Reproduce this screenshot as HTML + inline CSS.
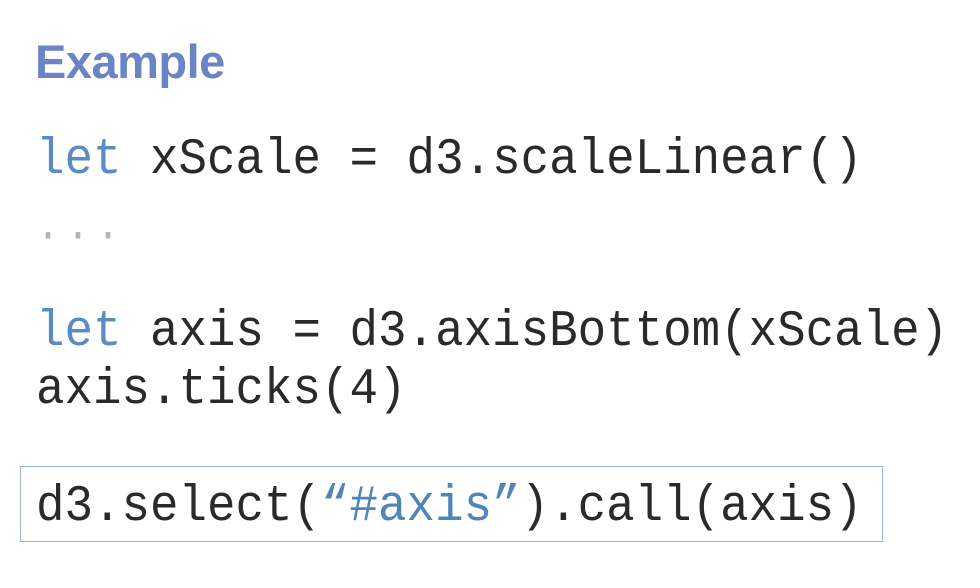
<!DOCTYPE html>
<html><head><meta charset="utf-8"><style>
html,body{margin:0;padding:0;background:#fff;width:980px;height:588px;overflow:hidden;position:relative}
.h{position:absolute;left:35px;top:38px;font:bold 47px/1 "Liberation Sans",sans-serif;color:#6a84c6;letter-spacing:-0.5px}
.c{position:absolute;left:36px;font:47.5px/1 "Liberation Mono",monospace;color:#2a2a2a;white-space:pre;transform:scaleY(1.08);transform-origin:0 36px}
.k{color:#5b8bc4}
.s{color:#4f86b8}
.d{color:#b5b5b5}
.box{position:absolute;left:20px;top:466px;width:863px;height:76px;border:1.5px solid #9db3d4;box-sizing:border-box}
</style></head><body>
<div class="h">Example</div>
<div class="c" style="top:138px"><span class="k">let</span> xScale = d3.scaleLinear()</div>
<div class="c d" style="top:210px;font-size:40px;letter-spacing:6px">...</div>
<div class="c" style="top:310px"><span class="k">let</span> axis = d3.axisBottom(xScale)</div>
<div class="c" style="top:368px">axis.ticks(4)</div>
<div class="box"></div>
<div class="c" style="top:485px">d3.select(<span class="s">“#axis”</span>).call(axis)</div>
</body></html>
